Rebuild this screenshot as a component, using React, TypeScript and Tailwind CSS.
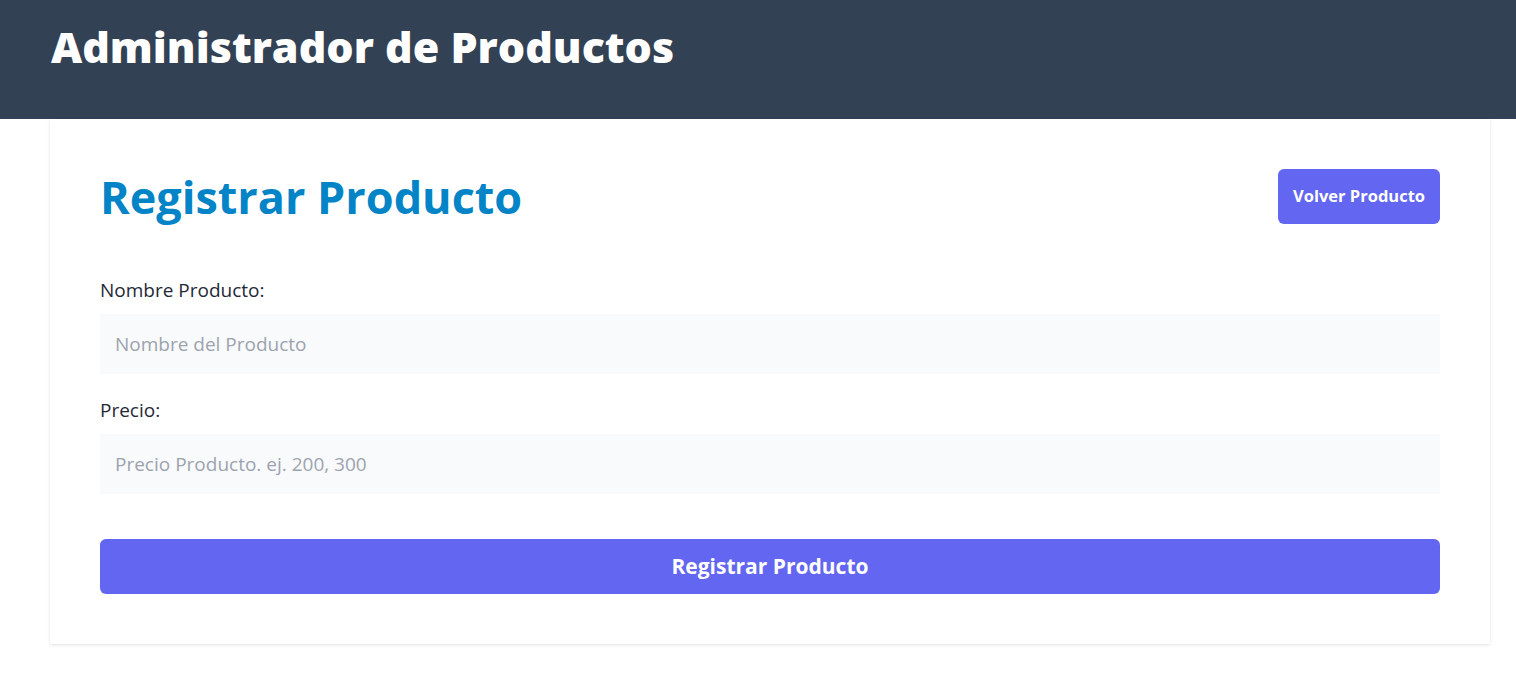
import React from 'react';

export default function App() {
  return (
    <div className="min-h-screen bg-white font-['Open_Sans',sans-serif]">
      {/* Top bar */}
      <header className="h-[119px] bg-[#334155] px-[51px] pt-[15px]">
        <h1 className="text-[43px] font-extrabold leading-[64px] text-white">Administrador de Productos</h1>
      </header>

      {/* Form card */}
      <main className="ml-[50px] mr-[26px] bg-white p-[50px] shadow-[0_1px_3px_rgba(0,0,0,0.12)]">
        <div className="flex items-center justify-between">
          <h2 className="text-[45px] font-bold leading-[55px] text-[#0284c7]">Registrar Producto</h2>
          <button className="h-[55px] w-[162px] rounded-md bg-[#6366f1] text-[16.5px] font-bold text-white">
            Volver Producto
          </button>
        </div>

        <form className="mt-[52px] flex flex-col" onSubmit={(e) => e.preventDefault()}>
          <label className="mb-[10px] text-[19px] leading-[28px] text-[#1f2937]">Nombre Producto:</label>
          <input
            type="text"
            placeholder="Nombre del Producto"
            className="h-[60px] bg-[#f9fafb] px-[15px] text-[19px] text-[#1f2937] outline-none placeholder:text-[#9ca3af]"
          />

          <label className="mb-[10px] mt-[22px] text-[19px] leading-[28px] text-[#1f2937]">Precio:</label>
          <input
            type="text"
            placeholder="Precio Producto. ej. 200, 300"
            className="h-[60px] bg-[#f9fafb] px-[15px] text-[19px] text-[#1f2937] outline-none placeholder:text-[#9ca3af]"
          />

          <button
            type="submit"
            className="mt-[45px] h-[55px] rounded-md bg-[#6366f1] text-[21px] font-bold text-white"
          >
            Registrar Producto
          </button>
        </form>
      </main>
    </div>
  );
}
